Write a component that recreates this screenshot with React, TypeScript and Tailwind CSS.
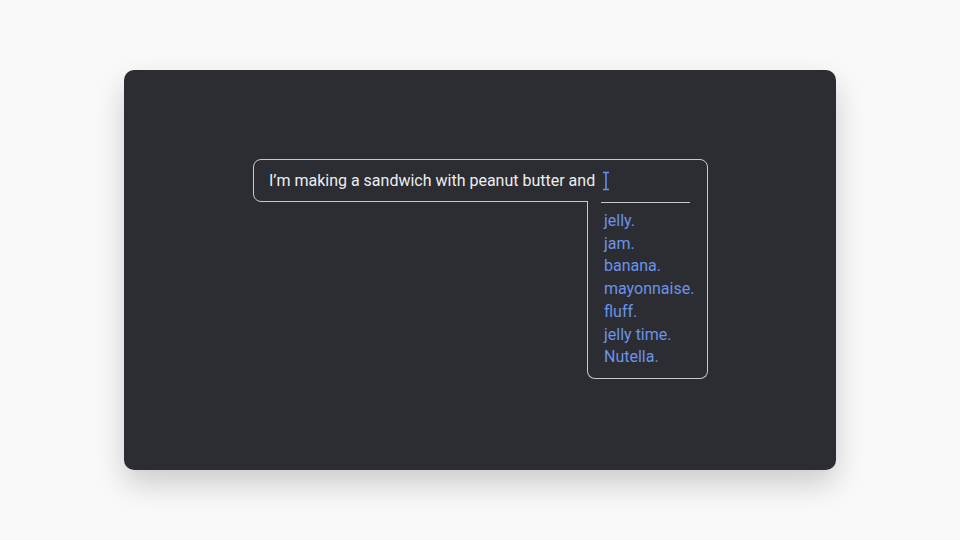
const suggestions = ["jelly.", "jam.", "banana.", "mayonnaise.", "fluff.", "jelly time.", "Nutella."];

function Cursor() {
  return (
    <svg width="8" height="20" viewBox="0 0 8 20" className="ml-[7px]">
      <path d="M1 1.5h6M1 18.5h6M4 1.5v17" stroke="#6b93ea" strokeWidth="1.5" fill="none" />
    </svg>
  );
}

export default function App() {
  return (
    <div className="flex h-[540px] w-[960px] items-center justify-center bg-[#f9f9f9] font-['Roboto',sans-serif]">
      <div className="h-[400px] w-[712px] rounded-[10px] bg-[#2b2d32] pl-[129px] pt-[89px] shadow-[0_14px_30px_rgba(0,0,0,0.18)]">
        <div className="flex w-[455px] flex-col">
          <div className="flex h-[43px] items-center rounded-t-[8px] rounded-bl-[8px] border border-[#c7c9cc] pl-[15px]">
            <span className="text-[16px] text-[#eceef0]">I’m making a sandwich with peanut butter and</span>
            <Cursor />
          </div>
          <div className="-mt-px w-[121px] self-end rounded-b-[8px] border-x border-b border-[#c7c9cc] bg-[#2b2d32] pb-[9px]">
            <div className="ml-[13px] mt-px h-px w-[89px] bg-[#c7c9cc]" />
            <div className="mt-[7px] flex flex-col pl-[16px]">
              {suggestions.map((s) => (
                <span key={s} className="text-[16px] leading-[22.7px] text-[#6b93ea]">
                  {s}
                </span>
              ))}
            </div>
          </div>
        </div>
      </div>
    </div>
  );
}
